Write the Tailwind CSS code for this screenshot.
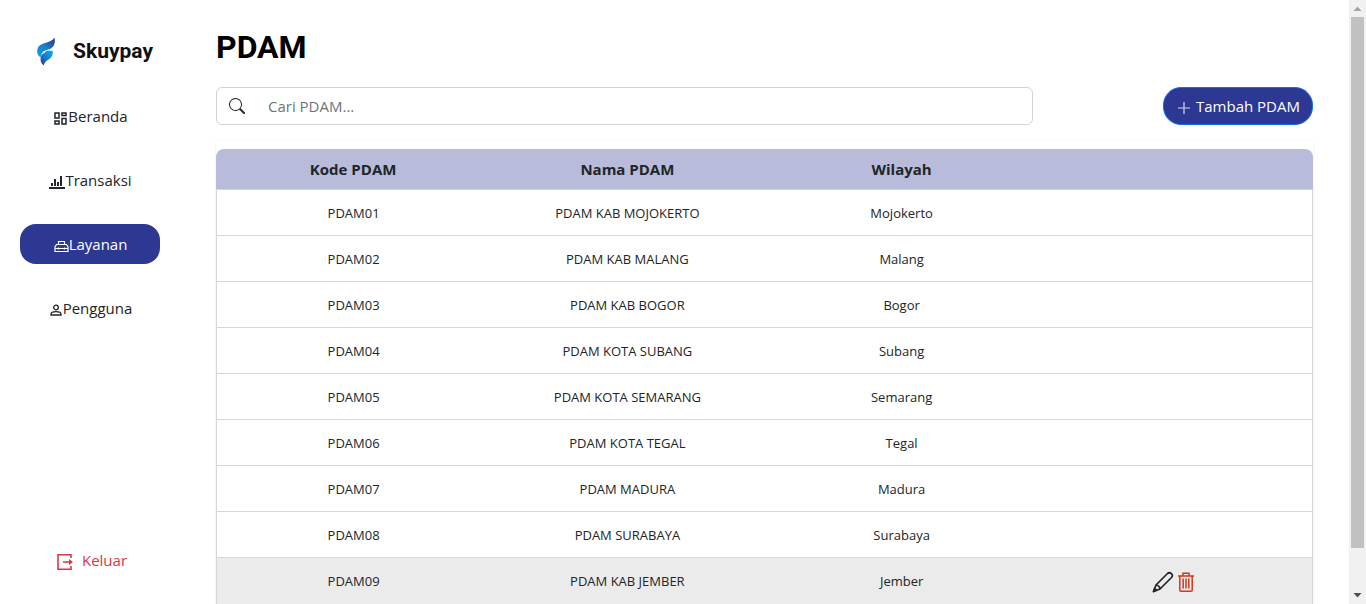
<!DOCTYPE html>
<html lang="id">
<head>
<meta charset="utf-8">
<meta name="viewport" content="width=device-width, initial-scale=1">
<title>Skuypay - PDAM</title>
<script src="https://cdn.jsdelivr.net/npm/@tailwindcss/browser@4"></script>
</head>
<body class="bg-white font-['Open_Sans','Noto_Sans',sans-serif] text-[#212529]">
<div class="flex h-screen overflow-hidden">
  <aside class="flex w-[180px] shrink-0 flex-col px-5 pt-9 pb-6">
    <a href="#" class="flex h-[30px] items-center gap-[17px] pl-4">
      <svg class="h-[30px] w-5 shrink-0" viewBox="0 0 20 30" aria-hidden="true">
        <defs>
          <linearGradient id="wing" x1="0" y1="1" x2="1" y2="0"><stop offset="0" stop-color="#10a0e8"/><stop offset=".5" stop-color="#1b80cc"/><stop offset="1" stop-color="#2b2f8e"/></linearGradient>
          <linearGradient id="tail" x1="0" y1="1" x2="1" y2="0"><stop offset="0" stop-color="#2b2f8e"/><stop offset=".45" stop-color="#1c78c6"/><stop offset="1" stop-color="#08b4f2"/></linearGradient>
        </defs>
        <path fill="url(#wing)" d="M18.500 1.500C19.500 6 18.500 10.500 14.500 12.700C10 14.500 8 14.500 6.500 16.500C5.500 18 5 19 4.500 21.500C1.500 19.500 .5 16 1.500 13C3 6 15.500 7.500 18.500 1.500Z"/>
        <path fill="url(#tail)" d="M4.800 21C5.500 18.500 6.500 17.500 8.500 17C9 14.800 13 13.500 16.800 15.200C17.300 20 14.500 22.500 11 24.500C9 25.800 8.500 27.500 7.500 29.500C5 27 4 24.500 4.800 21Z"/>
      </svg>
      <span class="font-[Roboto] text-[21px] leading-[30px] font-bold text-[#111]">Skuypay</span>
    </a>
    <nav class="mt-[30px] flex flex-col gap-6 text-[15px] [&_a]:pl-px">
      <a href="#" class="flex h-10 items-center justify-center rounded-2xl">
        <svg class="mt-1 size-[15px]" viewBox="0 0 15 15" fill="none" stroke="currentColor" stroke-width="1.500" aria-hidden="true"><path d="M2 2h4v5H2zM9 2h4v2.500H9zM2 10h4v3H2zM9 7.500h4V13H9z"/></svg>
        <span>Beranda</span>
      </a>
      <a href="#" class="flex h-10 items-center justify-center rounded-2xl">
        <svg class="mt-1 size-4" viewBox="0 0 16 16" fill="currentColor" aria-hidden="true"><path d="M0 13h16v2H0zM2 9h2v3H2zM5 5h2v7H5zM8 8h2v4H8zM11 2h2v10h-2z"/></svg>
        <span>Transaksi</span>
      </a>
      <a href="#" aria-current="page" class="flex h-10 items-center justify-center rounded-2xl bg-[#2c3891] text-white">
        <svg class="mt-1 size-[15px]" viewBox="0 0 15 15" fill="none" stroke="currentColor" stroke-width="1.200" aria-hidden="true"><path d="M1 12.500V8L2.500 5.500h10L14 8v4.500zM4.500 5.500v-3h6v3M1 9.500h13M4.500 8.500v2M10.500 8.500v2"/></svg>
        <span>Layanan</span>
      </a>
      <a href="#" class="flex h-10 items-center justify-center rounded-2xl">
        <svg class="mt-1 size-[14px]" viewBox="0 0 14 14" fill="none" stroke="currentColor" stroke-width="1.300" aria-hidden="true"><circle cx="7" cy="4.500" r="2.300"/><path d="M2 12v-1c0-3.200 10-3.200 10 0v1z"/></svg>
        <span>Pengguna</span>
      </a>
    </nav>
    <a href="#" class="mt-auto flex h-10 items-center justify-center gap-2 pl-[3px] text-[15px] text-[#dc3545]">
      <svg class="mt-1 size-[18px]" viewBox="0 0 18 18" fill="none" stroke="currentColor" stroke-width="1.600" aria-hidden="true"><path d="M15 5V1.800H2V16.200h13V13M7 9h8"/><path fill="currentColor" stroke="none" d="M13 6l4 3-4 3z"/></svg>
      <span>Keluar</span>
    </a>
  </aside>

  <main class="min-w-0 flex-1 px-9 pt-7">
    <h1 class="font-[Roboto] text-[32px] leading-[38px] font-bold text-black">PDAM</h1>
    <div class="mt-[21px] flex items-center">
      <label class="mr-[130px] flex h-[38px] flex-1 items-center rounded-md border border-[#ced4da]">
        <svg class="mx-3 size-4 shrink-0" viewBox="0 0 16 16" fill="currentColor" aria-hidden="true"><path d="M11.742 10.344a6.500 6.500 0 1 0-1.397 1.398h-.001c.03.04.062.078.098.115l3.850 3.850a1 1 0 0 0 1.415-1.414l-3.850-3.850a1.007 1.007 0 0 0-.115-.1zM12 6.500a5.500 5.500 0 1 1-11 0 5.500 5.500 0 0 1 11 0z"/></svg>
        <input type="text" aria-label="Cari PDAM" placeholder="Cari PDAM..." class="min-w-0 flex-1 bg-transparent pr-3 pl-[11px] text-[15px] outline-none placeholder:text-[#6c757d]">
      </label>
      <button type="button" class="flex h-[38px] w-[150px] items-center justify-center gap-1 rounded-[18px] border border-[#0d6efd] bg-[#2c3891] text-[15px] whitespace-nowrap text-white">
        <svg class="mt-1 size-4 shrink-0" viewBox="0 0 16 16" fill="none" stroke="currentColor" stroke-opacity=".8" stroke-width="1.200" aria-hidden="true"><path d="M8 2v12M2 8h12"/></svg>
        Tambah PDAM
      </button>
    </div>

    <div class="mt-4 pt-2 shadow-[0_1px_3px_rgba(0,0,0,0.08)]">
      <table class="w-full table-fixed border-separate border-spacing-0 text-center text-[13px] [&_td]:border-b [&_td]:border-[#d5d6d8] [&_td]:pt-0.5 [&_td:first-child]:border-l [&_td:last-child]:border-r">
        <thead class="text-[15px]">
          <tr class="h-[41px] [&>th]:border-b [&>th]:border-[#d5d6d8] [&>th]:bg-[#b8bcda] [&>th]:pt-px">
            <th scope="col" class="rounded-tl-lg font-bold">Kode PDAM</th>
            <th scope="col" class="font-bold">Nama PDAM</th>
            <th scope="col" class="font-bold">Wilayah</th>
            <th scope="col" aria-label="Aksi" class="rounded-tr-lg"></th>
          </tr>
        </thead>
        <tbody>
          <tr class="h-[46px]"><td>PDAM01</td><td>PDAM KAB MOJOKERTO</td><td>Mojokerto</td><td></td></tr>
          <tr class="h-[46px]"><td>PDAM02</td><td>PDAM KAB MALANG</td><td>Malang</td><td></td></tr>
          <tr class="h-[46px]"><td>PDAM03</td><td>PDAM KAB BOGOR</td><td>Bogor</td><td></td></tr>
          <tr class="h-[46px]"><td>PDAM04</td><td>PDAM KOTA SUBANG</td><td>Subang</td><td></td></tr>
          <tr class="h-[46px]"><td>PDAM05</td><td>PDAM KOTA SEMARANG</td><td>Semarang</td><td></td></tr>
          <tr class="h-[46px]"><td>PDAM06</td><td>PDAM KOTA TEGAL</td><td>Tegal</td><td></td></tr>
          <tr class="h-[46px]"><td>PDAM07</td><td>PDAM MADURA</td><td>Madura</td><td></td></tr>
          <tr class="h-[46px]"><td>PDAM08</td><td>PDAM SURABAYA</td><td>Surabaya</td><td></td></tr>
          <tr class="h-[47px] bg-[#ebebeb]"><td>PDAM09</td><td>PDAM KAB JEMBER</td><td>Jember</td>
            <td>
              <div class="flex items-center justify-center gap-[3px] pr-1">
                <button type="button" aria-label="Ubah">
                  <svg class="block size-[22px]" viewBox="0 0 22 22" fill="none" stroke="#212529" stroke-width="1.700" stroke-linejoin="round" aria-hidden="true"><path d="M1.500 20.500L4 14 15.500 2.500C18 .5 22 3.500 19.500 6.500L8 18zM4 14c2 0 4 2 4 4"/><path fill="#212529" d="M1.500 20.500l1.200-3 1.800 1.800z"/></svg>
                </button>
                <button type="button" aria-label="Hapus">
                  <svg class="block h-5 w-[18px]" viewBox="0 0 18 20" fill="none" stroke="#d8341c" stroke-width="1.500" aria-hidden="true"><path d="M1 4h16M6 4V1.200h6V4M2.800 4v14q0 1.200 1.200 1.200h10q1.200 0 1.200-1.200V4M6.200 6.500v10M9 6.500v10M11.800 6.500v10"/></svg>
                </button>
              </div>
            </td>
          </tr>
        </tbody>
      </table>
    </div>
  </main>

  <div class="flex w-[17px] shrink-0 flex-col items-center bg-[#f1f1f1]" aria-hidden="true">
    <svg class="h-[17px] w-[17px] shrink-0" viewBox="0 0 17 17"><path fill="#a3a3a3" d="M8.500 6.500l4 4.500h-8z"/></svg>
    <div class="w-[13px] flex-1 bg-[#c1c1c1]"></div>
    <svg class="mt-[39px] h-[17px] w-[17px] shrink-0" viewBox="0 0 17 17"><path fill="#505050" d="M8.500 10.500l4-4.500h-8z"/></svg>
  </div>
</div>
</body>
</html>
